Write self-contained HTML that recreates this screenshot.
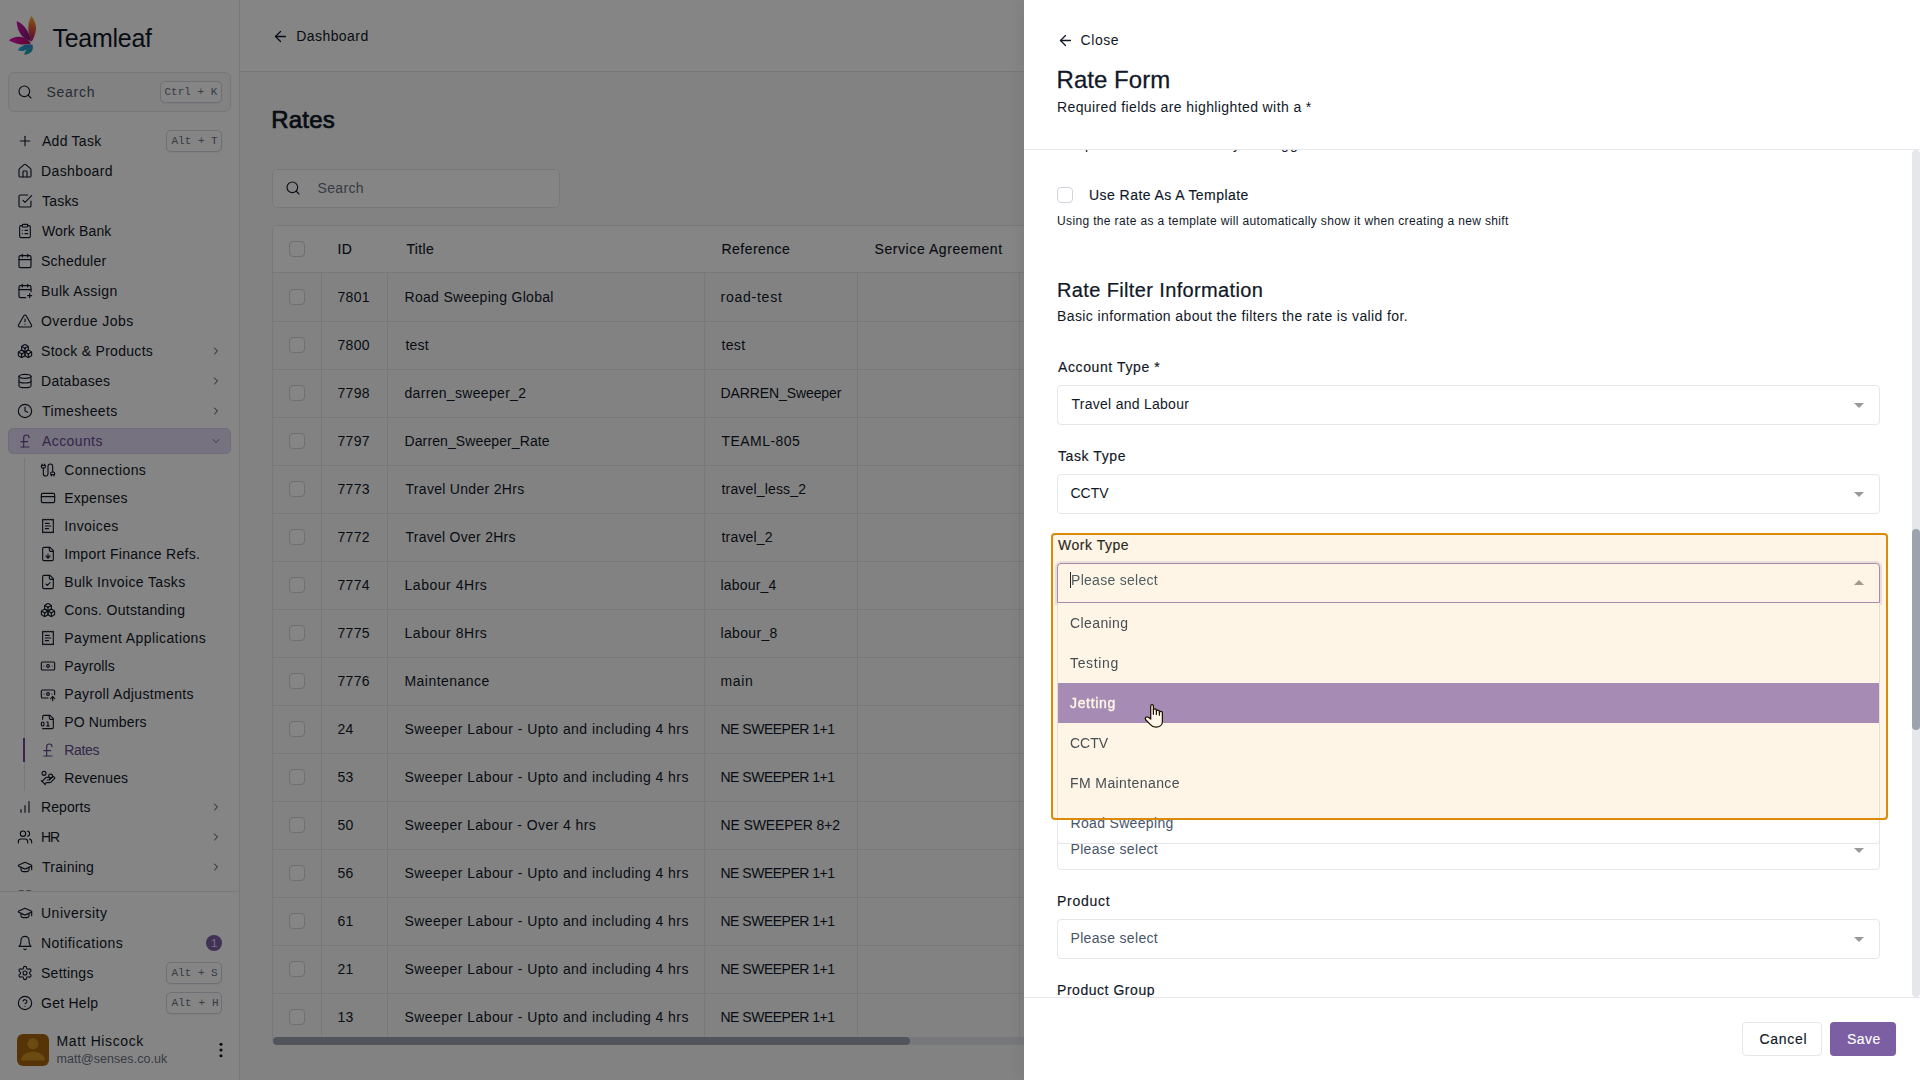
<!DOCTYPE html>
<html lang="en"><head><meta charset="utf-8"><title>Teamleaf - Rates</title>
<style>
*{box-sizing:border-box;margin:0;padding:0}
html,body{width:1920px;height:1080px;overflow:hidden;background:#f9fafb;font-family:"Liberation Sans",sans-serif;font-size:14px;color:#111827}
.bx{position:absolute;display:block}
.tx{position:absolute;white-space:pre;display:block}
.ix{position:absolute;display:block;line-height:0}
.ix svg{display:block}
.clip{position:absolute;overflow:hidden}
.mono{font-family:"Liberation Mono",monospace}
.sb{position:absolute;left:0;top:0;width:240px;height:1080px;background:#fff;border-right:1px solid #e5e7eb}
</style></head>
<body>
<div class="sb">
<svg class="bx" style="left:0;top:0" width="60" height="64" viewBox="0 0 60 64">
<defs>
<linearGradient id="g1" x1="0" y1="0" x2="0" y2="1"><stop offset="0" stop-color="#f9b52a"/><stop offset=".35" stop-color="#e8702e"/><stop offset=".7" stop-color="#c93c50"/><stop offset="1" stop-color="#a01f70"/></linearGradient>
<linearGradient id="g2" x1="0" y1="0" x2="1" y2="1"><stop offset="0" stop-color="#dc12aa"/><stop offset=".55" stop-color="#a3158c"/><stop offset="1" stop-color="#74196f"/></linearGradient>
<linearGradient id="g3" x1="0" y1="0" x2="1" y2="0"><stop offset="0" stop-color="#ea12bc"/><stop offset=".5" stop-color="#c80f8c"/><stop offset="1" stop-color="#a50f58"/></linearGradient>
<linearGradient id="g4" x1="0" y1="0" x2="1" y2="0"><stop offset="0" stop-color="#14b8ea"/><stop offset="1" stop-color="#3b78bc"/></linearGradient>
<linearGradient id="g5" x1="0" y1="1" x2="1" y2="0"><stop offset="0" stop-color="#12b894"/><stop offset=".6" stop-color="#2a98c4"/><stop offset="1" stop-color="#4478c8"/></linearGradient>
</defs>
<path d="M31.400 16C28.500 20 27.500 28 29 34c.8 3.500 1.800 6 2.600 7.700C33.500 39 35.500 34 36 29c.3-4.500-2-10-4.600-13z" fill="url(#g1)"/>
<path d="M16.600 21.200c.4 4.800 1.400 8.800 3.900 12.800 2.500 4 6.500 6.500 10.600 7.200-.6-4.200-2.600-9.200-5.600-13.200s-6-6-8.900-6.800z" fill="url(#g2)"/>
<path d="M8.800 40.200c3.200-2.700 7.200-3.900 11.200-3.400 4.500.6 8.500 3.200 11.100 6.500-4.100 1.500-8.600 1.700-12.600.7s-7.500-2.500-9.700-3.800z" fill="url(#g3)"/>
<path d="M17.900 50.300c1.100-2.300 3.100-4 6.100-5 2.500-.8 5.500-1.100 7.600-1-1.600 2.700-4.100 5.200-7.100 6.300-2.500.8-5 .6-6.600-.3z" fill="url(#g4)"/>
<path d="M24.100 54.700c.7-2.700 2.400-5.200 4.400-7.200 1.200-1.300 2.500-2.500 3.700-3.200 1 2.200 1 4.700-.2 6.700-1.500 2.300-4.700 3.700-7.900 3.700z" fill="url(#g5)"/>
</svg>
<span class="tx" style="left:52.50px;top:23.00px;font-size:25px;line-height:30px;letter-spacing:-0.271px;color:#111827;">Teamleaf</span>
<div class="bx" style="left:8px;top:72px;width:223px;height:39.5px;border:1px solid #e5e7eb;border-radius:6px;background:#fafafa"></div>
<span class="ix" style="left:17px;top:84.0px;color:#111827;"><svg class="ic" width="16" height="16" viewBox="0 0 24 24" fill="none" stroke="currentColor" stroke-width="1.7" stroke-linecap="round" stroke-linejoin="round" ><circle cx="11" cy="11" r="8"/><path d="m21 21-4.3-4.3"/></svg></span>
<span class="tx" style="left:46.50px;top:82.00px;font-size:14px;line-height:20px;letter-spacing:0.730px;color:#4b5563;">Search</span>
<div class="bx" style="left:160px;top:81px;width:62px;height:22px;border:1px solid #d3d7e3;border-radius:5px;background:#fff;box-shadow:0 1px 1px rgba(30,40,80,0.06)"></div><span class="tx mono" style="left:164.50px;top:85.00px;font-size:11px;line-height:14px;letter-spacing:0.000px;color:#6b7280;">Ctrl + K</span>
<div class="clip" style="left:0;top:120px;width:239px;height:771px"><div class="bx" style="left:0;top:-120px">
<div class="bx" style="left:8px;top:428px;width:223px;height:26px;background:#e2dbf5;border:1px solid #d8d0f0;border-radius:5px"></div>
<span class="ix" style="left:17px;top:133.0px;color:#111827;"><svg class="ic" width="16" height="16" viewBox="0 0 24 24" fill="none" stroke="currentColor" stroke-width="1.7" stroke-linecap="round" stroke-linejoin="round" ><path d="M5 12h14"/><path d="M12 5v14"/></svg></span>
<span class="tx" style="left:42.00px;top:131.00px;font-size:14px;line-height:20px;letter-spacing:0.259px;color:#111827;">Add Task</span>
<span class="ix" style="left:17px;top:163.0px;color:#111827;"><svg class="ic" width="16" height="16" viewBox="0 0 24 24" fill="none" stroke="currentColor" stroke-width="1.7" stroke-linecap="round" stroke-linejoin="round" ><path d="M15 21v-8a1 1 0 0 0-1-1h-4a1 1 0 0 0-1 1v8"/><path d="M3 10a2 2 0 0 1 .709-1.528l7-5.999a2 2 0 0 1 2.582 0l7 5.999A2 2 0 0 1 21 10v9a2 2 0 0 1-2 2H5a2 2 0 0 1-2-2z"/></svg></span>
<span class="tx" style="left:41.00px;top:161.00px;font-size:14px;line-height:20px;letter-spacing:0.393px;color:#111827;">Dashboard</span>
<span class="ix" style="left:17px;top:193.0px;color:#111827;"><svg class="ic" width="16" height="16" viewBox="0 0 24 24" fill="none" stroke="currentColor" stroke-width="1.7" stroke-linecap="round" stroke-linejoin="round" ><path d="m9 11 3 3L22 4"/><path d="M21 12v7a2 2 0 0 1-2 2H5a2 2 0 0 1-2-2V5a2 2 0 0 1 2-2h11"/></svg></span>
<span class="tx" style="left:42.00px;top:191.00px;font-size:14px;line-height:20px;letter-spacing:0.205px;color:#111827;">Tasks</span>
<span class="ix" style="left:17px;top:223.0px;color:#111827;"><svg class="ic" width="16" height="16" viewBox="0 0 24 24" fill="none" stroke="currentColor" stroke-width="1.7" stroke-linecap="round" stroke-linejoin="round" ><rect width="8" height="4" x="8" y="2" rx="1" ry="1"/><path d="M16 4h2a2 2 0 0 1 2 2v14a2 2 0 0 1-2 2H6a2 2 0 0 1-2-2V6a2 2 0 0 1 2-2h2"/><path d="M12 11h4"/><path d="M12 16h4"/><path d="M8 11h.01"/><path d="M8 16h.01"/></svg></span>
<span class="tx" style="left:42.00px;top:221.00px;font-size:14px;line-height:20px;letter-spacing:0.143px;color:#111827;">Work Bank</span>
<span class="ix" style="left:17px;top:253.0px;color:#111827;"><svg class="ic" width="16" height="16" viewBox="0 0 24 24" fill="none" stroke="currentColor" stroke-width="1.7" stroke-linecap="round" stroke-linejoin="round" ><path d="M8 2v4"/><path d="M16 2v4"/><rect width="18" height="18" x="3" y="4" rx="2"/><path d="M3 10h18"/></svg></span>
<span class="tx" style="left:41.00px;top:251.00px;font-size:14px;line-height:20px;letter-spacing:0.268px;color:#111827;">Scheduler</span>
<span class="ix" style="left:17px;top:283.0px;color:#111827;"><svg class="ic" width="16" height="16" viewBox="0 0 24 24" fill="none" stroke="currentColor" stroke-width="1.7" stroke-linecap="round" stroke-linejoin="round" ><path d="M8 2v4"/><path d="M16 2v4"/><path d="M21 13V6a2 2 0 0 0-2-2H5a2 2 0 0 0-2 2v14a2 2 0 0 0 2 2h8"/><path d="M3 10h18"/><path d="M16 19h6"/><path d="M19 16v6"/></svg></span>
<span class="tx" style="left:41.00px;top:281.00px;font-size:14px;line-height:20px;letter-spacing:0.380px;color:#111827;">Bulk Assign</span>
<span class="ix" style="left:17px;top:313.0px;color:#111827;"><svg class="ic" width="16" height="16" viewBox="0 0 24 24" fill="none" stroke="currentColor" stroke-width="1.7" stroke-linecap="round" stroke-linejoin="round" ><path d="m21.73 18-8-14a2 2 0 0 0-3.48 0l-8 14A2 2 0 0 0 4 21h16a2 2 0 0 0 1.73-3"/><path d="M12 9v4"/><path d="M12 17h.01"/></svg></span>
<span class="tx" style="left:41.00px;top:311.00px;font-size:14px;line-height:20px;letter-spacing:0.466px;color:#111827;">Overdue Jobs</span>
<span class="ix" style="left:17px;top:343.0px;color:#111827;"><svg class="ic" width="16" height="16" viewBox="0 0 24 24" fill="none" stroke="currentColor" stroke-width="1.7" stroke-linecap="round" stroke-linejoin="round" ><path d="M2.97 12.92A2 2 0 0 0 2 14.63v3.24a2 2 0 0 0 .97 1.71l3 1.8a2 2 0 0 0 2.06 0L12 19v-5.5l-5-3-4.03 2.42Z"/><path d="m7 16.5-4.74-2.85"/><path d="m7 16.5 5-3"/><path d="M7 16.5v5.17"/><path d="M12 13.5V19l3.97 2.38a2 2 0 0 0 2.06 0l3-1.8a2 2 0 0 0 .97-1.71v-3.24a2 2 0 0 0-.97-1.71L17 10.5l-5 3Z"/><path d="m17 16.5-5-3"/><path d="m17 16.5 4.74-2.85"/><path d="M17 16.5v5.17"/><path d="M7.97 4.42A2 2 0 0 0 7 6.13v4.37l5 3 5-3V6.13a2 2 0 0 0-.97-1.71l-3-1.8a2 2 0 0 0-2.06 0l-3 1.8Z"/><path d="M12 8 7.26 5.15"/><path d="m12 8 4.74-2.85"/><path d="M12 13.5V8"/></svg></span>
<span class="tx" style="left:41.00px;top:341.00px;font-size:14px;line-height:20px;letter-spacing:0.297px;color:#111827;">Stock &amp; Products</span>
<span class="ix" style="left:210px;top:345.0px;color:#111827;"><svg class="ic" width="12" height="12" viewBox="0 0 24 24" fill="none" stroke="currentColor" stroke-width="1.7" stroke-linecap="round" stroke-linejoin="round" ><path d="m9 18 6-6-6-6"/></svg></span>
<span class="ix" style="left:17px;top:373.0px;color:#111827;"><svg class="ic" width="16" height="16" viewBox="0 0 24 24" fill="none" stroke="currentColor" stroke-width="1.7" stroke-linecap="round" stroke-linejoin="round" ><ellipse cx="12" cy="5" rx="9" ry="3"/><path d="M3 5V19A9 3 0 0 0 21 19V5"/><path d="M3 12A9 3 0 0 0 21 12"/></svg></span>
<span class="tx" style="left:41.00px;top:371.00px;font-size:14px;line-height:20px;letter-spacing:0.268px;color:#111827;">Databases</span>
<span class="ix" style="left:210px;top:375.0px;color:#111827;"><svg class="ic" width="12" height="12" viewBox="0 0 24 24" fill="none" stroke="currentColor" stroke-width="1.7" stroke-linecap="round" stroke-linejoin="round" ><path d="m9 18 6-6-6-6"/></svg></span>
<span class="ix" style="left:17px;top:403.0px;color:#111827;"><svg class="ic" width="16" height="16" viewBox="0 0 24 24" fill="none" stroke="currentColor" stroke-width="1.7" stroke-linecap="round" stroke-linejoin="round" ><circle cx="12" cy="12" r="10"/><polyline points="12 6 12 12 16 14"/></svg></span>
<span class="tx" style="left:42.00px;top:401.00px;font-size:14px;line-height:20px;letter-spacing:0.386px;color:#111827;">Timesheets</span>
<span class="ix" style="left:210px;top:405.0px;color:#111827;"><svg class="ic" width="12" height="12" viewBox="0 0 24 24" fill="none" stroke="currentColor" stroke-width="1.7" stroke-linecap="round" stroke-linejoin="round" ><path d="m9 18 6-6-6-6"/></svg></span>
<span class="ix" style="left:17px;top:433.0px;color:#65488e;"><svg class="ic" width="16" height="16" viewBox="0 0 24 24" fill="none" stroke="currentColor" stroke-width="1.7" stroke-linecap="round" stroke-linejoin="round" ><path d="M18 7c0-5.333-8-5.333-8 0"/><path d="M10 7v14"/><path d="M6 21h12"/><path d="M6 13h10"/></svg></span>
<span class="tx" style="left:42.00px;top:431.00px;font-size:14px;line-height:20px;letter-spacing:0.401px;color:#65488e;">Accounts</span>
<span class="ix" style="left:210px;top:435.0px;color:#65488e;"><svg class="ic" width="12" height="12" viewBox="0 0 24 24" fill="none" stroke="currentColor" stroke-width="1.7" stroke-linecap="round" stroke-linejoin="round" ><path d="m6 9 6 6 6-6"/></svg></span>
<span class="ix" style="left:17px;top:799.0px;color:#111827;"><svg class="ic" width="16" height="16" viewBox="0 0 24 24" fill="none" stroke="currentColor" stroke-width="1.7" stroke-linecap="round" stroke-linejoin="round" ><line x1="18" x2="18" y1="20" y2="4"/><line x1="12" x2="12" y1="20" y2="10"/><line x1="6" x2="6" y1="20" y2="16"/></svg></span>
<span class="tx" style="left:41.00px;top:797.00px;font-size:14px;line-height:20px;letter-spacing:0.080px;color:#111827;">Reports</span>
<span class="ix" style="left:210px;top:801.0px;color:#111827;"><svg class="ic" width="12" height="12" viewBox="0 0 24 24" fill="none" stroke="currentColor" stroke-width="1.7" stroke-linecap="round" stroke-linejoin="round" ><path d="m9 18 6-6-6-6"/></svg></span>
<span class="ix" style="left:17px;top:829.0px;color:#111827;"><svg class="ic" width="16" height="16" viewBox="0 0 24 24" fill="none" stroke="currentColor" stroke-width="1.7" stroke-linecap="round" stroke-linejoin="round" ><path d="M16 21v-2a4 4 0 0 0-4-4H6a4 4 0 0 0-4 4v2"/><circle cx="9" cy="7" r="4"/><path d="M22 21v-2a4 4 0 0 0-3-3.87"/><path d="M16 3.13a4 4 0 0 1 0 7.75"/></svg></span>
<span class="tx" style="left:41.00px;top:827.00px;font-size:14px;line-height:20px;letter-spacing:-1.170px;color:#111827;">HR</span>
<span class="ix" style="left:210px;top:831.0px;color:#111827;"><svg class="ic" width="12" height="12" viewBox="0 0 24 24" fill="none" stroke="currentColor" stroke-width="1.7" stroke-linecap="round" stroke-linejoin="round" ><path d="m9 18 6-6-6-6"/></svg></span>
<span class="ix" style="left:17px;top:859.0px;color:#111827;"><svg class="ic" width="16" height="16" viewBox="0 0 24 24" fill="none" stroke="currentColor" stroke-width="1.7" stroke-linecap="round" stroke-linejoin="round" ><path d="M21.42 10.922a1 1 0 0 0-.019-1.838L12.83 5.18a2 2 0 0 0-1.66 0L2.6 9.08a1 1 0 0 0 0 1.832l8.57 3.908a2 2 0 0 0 1.66 0z"/><path d="M22 10v6"/><path d="M6 12.5V16a6 3 0 0 0 12 0v-3.5"/></svg></span>
<span class="tx" style="left:42.00px;top:857.00px;font-size:14px;line-height:20px;letter-spacing:0.259px;color:#111827;">Training</span>
<span class="ix" style="left:210px;top:861.0px;color:#111827;"><svg class="ic" width="12" height="12" viewBox="0 0 24 24" fill="none" stroke="currentColor" stroke-width="1.7" stroke-linecap="round" stroke-linejoin="round" ><path d="m9 18 6-6-6-6"/></svg></span>
<span class="ix" style="left:17px;top:889.0px;color:#111827;"><svg class="ic" width="16" height="16" viewBox="0 0 24 24" fill="none" stroke="currentColor" stroke-width="1.7" stroke-linecap="round" stroke-linejoin="round" ><rect width="7" height="7" x="3" y="3" rx="1"/><rect width="7" height="7" x="14" y="3" rx="1"/><rect width="7" height="7" x="14" y="14" rx="1"/><rect width="7" height="7" x="3" y="14" rx="1"/></svg></span>
<span class="tx" style="left:41.00px;top:887.00px;font-size:14px;line-height:20px;letter-spacing:1.430px;color:#111827;">Portal</span>
<span class="ix" style="left:210px;top:891.0px;color:#111827;"><svg class="ic" width="12" height="12" viewBox="0 0 24 24" fill="none" stroke="currentColor" stroke-width="1.7" stroke-linecap="round" stroke-linejoin="round" ><path d="m9 18 6-6-6-6"/></svg></span>
<div class="bx" style="left:166px;top:130px;width:56px;height:22px;border:1px solid #d3d7e3;border-radius:5px;background:#fff;box-shadow:0 1px 1px rgba(30,40,80,0.06)"></div><span class="tx mono" style="left:171.50px;top:134.00px;font-size:11px;line-height:14px;letter-spacing:0.000px;color:#6b7280;">Alt + T</span>
<div class="bx" style="left:24px;top:458px;width:1px;height:333px;background:#e5e7eb"></div>
<div class="bx" style="left:23px;top:738px;width:2px;height:24px;background:#6a4a96"></div>
<span class="ix" style="left:40px;top:462.0px;color:#111827;"><svg class="ic" width="16" height="16" viewBox="0 0 24 24" fill="none" stroke="currentColor" stroke-width="1.7" stroke-linecap="round" stroke-linejoin="round" ><path d="M17 21v-2a1 1 0 0 1-1-1v-1a2 2 0 0 1 2-2h2a2 2 0 0 1 2 2v1a1 1 0 0 1-1 1"/><path d="M19 15V6.5a1 1 0 0 0-7 0v11a1 1 0 0 1-7 0V9"/><path d="M21 21v-2h-4"/><path d="M3 5h4V3"/><path d="M7 5a1 1 0 0 1 1 1v1a2 2 0 0 1-2 2H4a2 2 0 0 1-2-2V6a1 1 0 0 1 1-1V3"/></svg></span>
<span class="tx" style="left:64.20px;top:460.00px;font-size:14px;line-height:20px;letter-spacing:0.380px;color:#111827;">Connections</span>
<span class="ix" style="left:40px;top:490.0px;color:#111827;"><svg class="ic" width="16" height="16" viewBox="0 0 24 24" fill="none" stroke="currentColor" stroke-width="1.7" stroke-linecap="round" stroke-linejoin="round" ><rect width="20" height="14" x="2" y="5" rx="2"/><line x1="2" x2="22" y1="10" y2="10"/></svg></span>
<span class="tx" style="left:64.20px;top:488.00px;font-size:14px;line-height:20px;letter-spacing:0.259px;color:#111827;">Expenses</span>
<span class="ix" style="left:40px;top:518.0px;color:#111827;"><svg class="ic" width="16" height="16" viewBox="0 0 24 24" fill="none" stroke="currentColor" stroke-width="1.7" stroke-linecap="round" stroke-linejoin="round" ><path d="M4 2v20l2-1 2 1 2-1 2 1 2-1 2 1 2-1 2 1V2l-2 1-2-1-2 1-2-1-2 1-2-1-2 1Z"/><path d="M14 8H8"/><path d="M16 12H8"/><path d="M13 16H8"/></svg></span>
<span class="tx" style="left:64.20px;top:516.00px;font-size:14px;line-height:20px;letter-spacing:0.401px;color:#111827;">Invoices</span>
<span class="ix" style="left:40px;top:546.0px;color:#111827;"><svg class="ic" width="16" height="16" viewBox="0 0 24 24" fill="none" stroke="currentColor" stroke-width="1.7" stroke-linecap="round" stroke-linejoin="round" ><path d="M15 2H6a2 2 0 0 0-2 2v16a2 2 0 0 0 2 2h12a2 2 0 0 0 2-2V7Z"/><path d="M14 2v4a2 2 0 0 0 2 2h4"/><path d="M12 18v-6"/><path d="m9 15 3 3 3-3"/></svg></span>
<span class="tx" style="left:64.20px;top:544.00px;font-size:14px;line-height:20px;letter-spacing:0.304px;color:#111827;">Import Finance Refs.</span>
<span class="ix" style="left:40px;top:574.0px;color:#111827;"><svg class="ic" width="16" height="16" viewBox="0 0 24 24" fill="none" stroke="currentColor" stroke-width="1.7" stroke-linecap="round" stroke-linejoin="round" ><path d="M15 2H6a2 2 0 0 0-2 2v16a2 2 0 0 0 2 2h12a2 2 0 0 0 2-2V7Z"/><path d="M14 2v4a2 2 0 0 0 2 2h4"/><path d="m9 15 2 2 4-4"/></svg></span>
<span class="tx" style="left:64.20px;top:572.00px;font-size:14px;line-height:20px;letter-spacing:0.359px;color:#111827;">Bulk Invoice Tasks</span>
<span class="ix" style="left:40px;top:602.0px;color:#111827;"><svg class="ic" width="16" height="16" viewBox="0 0 24 24" fill="none" stroke="currentColor" stroke-width="1.7" stroke-linecap="round" stroke-linejoin="round" ><path d="M2.97 12.92A2 2 0 0 0 2 14.63v3.24a2 2 0 0 0 .97 1.71l3 1.8a2 2 0 0 0 2.06 0L12 19v-5.5l-5-3-4.03 2.42Z"/><path d="m7 16.5-4.74-2.85"/><path d="m7 16.5 5-3"/><path d="M7 16.5v5.17"/><path d="M12 13.5V19l3.97 2.38a2 2 0 0 0 2.06 0l3-1.8a2 2 0 0 0 .97-1.71v-3.24a2 2 0 0 0-.97-1.71L17 10.5l-5 3Z"/><path d="m17 16.5-5-3"/><path d="m17 16.5 4.74-2.85"/><path d="M17 16.5v5.17"/><path d="M7.97 4.42A2 2 0 0 0 7 6.13v4.37l5 3 5-3V6.13a2 2 0 0 0-.97-1.71l-3-1.8a2 2 0 0 0-2.06 0l-3 1.8Z"/><path d="M12 8 7.26 5.15"/><path d="m12 8 4.74-2.85"/><path d="M12 13.5V8"/></svg></span>
<span class="tx" style="left:64.20px;top:600.00px;font-size:14px;line-height:20px;letter-spacing:0.299px;color:#111827;">Cons. Outstanding</span>
<span class="ix" style="left:40px;top:630.0px;color:#111827;"><svg class="ic" width="16" height="16" viewBox="0 0 24 24" fill="none" stroke="currentColor" stroke-width="1.7" stroke-linecap="round" stroke-linejoin="round" ><path d="M4 2v20l2-1 2 1 2-1 2 1 2-1 2 1 2-1 2 1V2l-2 1-2-1-2 1-2-1-2 1-2-1-2 1Z"/><path d="M14 8H8"/><path d="M16 12H8"/><path d="M13 16H8"/></svg></span>
<span class="tx" style="left:64.20px;top:628.00px;font-size:14px;line-height:20px;letter-spacing:0.409px;color:#111827;">Payment Applications</span>
<span class="ix" style="left:40px;top:658.0px;color:#111827;"><svg class="ic" width="16" height="16" viewBox="0 0 24 24" fill="none" stroke="currentColor" stroke-width="1.7" stroke-linecap="round" stroke-linejoin="round" ><rect width="20" height="12" x="2" y="6" rx="2"/><circle cx="12" cy="12" r="2"/><path d="M6 12h.01M18 12h.01"/></svg></span>
<span class="tx" style="left:64.20px;top:656.00px;font-size:14px;line-height:20px;letter-spacing:0.116px;color:#111827;">Payrolls</span>
<span class="ix" style="left:40px;top:686.0px;color:#111827;"><svg class="ic" width="16" height="16" viewBox="0 0 24 24" fill="none" stroke="currentColor" stroke-width="1.7" stroke-linecap="round" stroke-linejoin="round" ><path d="M12 18H4a2 2 0 0 1-2-2V8a2 2 0 0 1 2-2h16a2 2 0 0 1 2 2v5"/><path d="M18 12h.01"/><path d="M19 22v-6"/><path d="m22 19-3-3-3 3"/><path d="M6 12h.01"/><circle cx="12" cy="12" r="2"/></svg></span>
<span class="tx" style="left:64.20px;top:684.00px;font-size:14px;line-height:20px;letter-spacing:0.358px;color:#111827;">Payroll Adjustments</span>
<span class="ix" style="left:40px;top:714.0px;color:#111827;"><svg class="ic" width="16" height="16" viewBox="0 0 24 24" fill="none" stroke="currentColor" stroke-width="1.7" stroke-linecap="round" stroke-linejoin="round" ><path d="M4 22h14a2 2 0 0 0 2-2V7l-5-5H6a2 2 0 0 0-2 2v4"/><path d="M14 2v4a2 2 0 0 0 2 2h4"/><rect width="4" height="6" x="2" y="12" rx="2"/><path d="M10 12h2v6"/><path d="M10 18h4"/></svg></span>
<span class="tx" style="left:64.20px;top:712.00px;font-size:14px;line-height:20px;letter-spacing:0.163px;color:#111827;">PO Numbers</span>
<span class="ix" style="left:40px;top:742.0px;color:#65488e;"><svg class="ic" width="16" height="16" viewBox="0 0 24 24" fill="none" stroke="currentColor" stroke-width="1.7" stroke-linecap="round" stroke-linejoin="round" ><path d="M18 7c0-5.333-8-5.333-8 0"/><path d="M10 7v14"/><path d="M6 21h12"/><path d="M6 13h10"/></svg></span>
<span class="tx" style="left:64.20px;top:740.00px;font-size:14px;line-height:20px;letter-spacing:-0.295px;color:#65488e;">Rates</span>
<span class="ix" style="left:40px;top:770.0px;color:#111827;"><svg class="ic" width="16" height="16" viewBox="0 0 24 24" fill="none" stroke="currentColor" stroke-width="1.7" stroke-linecap="round" stroke-linejoin="round" ><path d="M11 15h2a2 2 0 1 0 0-4h-3c-.6 0-1.1.2-1.4.6L3 17"/><path d="m7 21 1.6-1.4c.3-.4.8-.6 1.4-.6h4c1.1 0 2.1-.4 2.8-1.2l4.6-4.4a2 2 0 0 0-2.75-2.91l-4.2 3.9"/><path d="m2 16 6 6"/><circle cx="16" cy="9" r="2.9"/><circle cx="6" cy="5" r="3"/></svg></span>
<span class="tx" style="left:64.20px;top:768.00px;font-size:14px;line-height:20px;letter-spacing:0.116px;color:#111827;">Revenues</span>
</div></div>
<div class="bx" style="left:0px;top:891px;width:239px;height:1px;background:#e5e7eb"></div>
<span class="ix" style="left:17px;top:905.0px;color:#111827;"><svg class="ic" width="16" height="16" viewBox="0 0 24 24" fill="none" stroke="currentColor" stroke-width="1.7" stroke-linecap="round" stroke-linejoin="round" ><path d="M21.42 10.922a1 1 0 0 0-.019-1.838L12.83 5.18a2 2 0 0 0-1.66 0L2.6 9.08a1 1 0 0 0 0 1.832l8.57 3.908a2 2 0 0 0 1.66 0z"/><path d="M22 10v6"/><path d="M6 12.5V16a6 3 0 0 0 12 0v-3.5"/></svg></span>
<span class="tx" style="left:41.00px;top:903.00px;font-size:14px;line-height:20px;letter-spacing:0.497px;color:#111827;">University</span>
<span class="ix" style="left:17px;top:935.0px;color:#111827;"><svg class="ic" width="16" height="16" viewBox="0 0 24 24" fill="none" stroke="currentColor" stroke-width="1.7" stroke-linecap="round" stroke-linejoin="round" ><path d="M6 8a6 6 0 0 1 12 0c0 7 3 9 3 9H3s3-2 3-9"/><path d="M10.3 21a1.94 1.94 0 0 0 3.4 0"/></svg></span>
<span class="tx" style="left:41.00px;top:933.00px;font-size:14px;line-height:20px;letter-spacing:0.455px;color:#111827;">Notifications</span>
<span class="ix" style="left:17px;top:965.0px;color:#111827;"><svg class="ic" width="16" height="16" viewBox="0 0 24 24" fill="none" stroke="currentColor" stroke-width="1.7" stroke-linecap="round" stroke-linejoin="round" ><path d="M12.22 2h-.44a2 2 0 0 0-2 2v.18a2 2 0 0 1-1 1.73l-.43.25a2 2 0 0 1-2 0l-.15-.08a2 2 0 0 0-2.73.73l-.22.38a2 2 0 0 0 .73 2.73l.15.1a2 2 0 0 1 1 1.72v.51a2 2 0 0 1-1 1.74l-.15.09a2 2 0 0 0-.73 2.73l.22.38a2 2 0 0 0 2.73.73l.15-.08a2 2 0 0 1 2 0l.43.25a2 2 0 0 1 1 1.73V20a2 2 0 0 0 2 2h.44a2 2 0 0 0 2-2v-.18a2 2 0 0 1 1-1.73l.43-.25a2 2 0 0 1 2 0l.15.08a2 2 0 0 0 2.73-.73l.22-.39a2 2 0 0 0-.73-2.73l-.15-.08a2 2 0 0 1-1-1.74v-.5a2 2 0 0 1 1-1.74l.15-.09a2 2 0 0 0 .73-2.73l-.22-.38a2 2 0 0 0-2.73-.73l-.15.08a2 2 0 0 1-2 0l-.43-.25a2 2 0 0 1-1-1.73V4a2 2 0 0 0-2-2z"/><circle cx="12" cy="12" r="3"/></svg></span>
<span class="tx" style="left:41.00px;top:963.00px;font-size:14px;line-height:20px;letter-spacing:0.259px;color:#111827;">Settings</span>
<span class="ix" style="left:17px;top:995.0px;color:#111827;"><svg class="ic" width="16" height="16" viewBox="0 0 24 24" fill="none" stroke="currentColor" stroke-width="1.7" stroke-linecap="round" stroke-linejoin="round" ><circle cx="12" cy="12" r="10"/><path d="M9.09 9a3 3 0 0 1 5.83 1c0 2-3 3-3 3"/><path d="M12 17h.01"/></svg></span>
<span class="tx" style="left:41.00px;top:993.00px;font-size:14px;line-height:20px;letter-spacing:0.259px;color:#111827;">Get Help</span>
<div class="bx" style="left:206px;top:935px;width:16px;height:16px;background:#7c5ea3;border-radius:8px"></div>
<span class="tx" style="left:211.00px;top:936.00px;font-size:11.5px;line-height:14px;letter-spacing:0.000px;color:#e3d8f3;">1</span>
<div class="bx" style="left:166px;top:962px;width:56px;height:22px;border:1px solid #d3d7e3;border-radius:5px;background:#fff;box-shadow:0 1px 1px rgba(30,40,80,0.06)"></div><span class="tx mono" style="left:171.50px;top:966.00px;font-size:11px;line-height:14px;letter-spacing:0.000px;color:#6b7280;">Alt + S</span>
<div class="bx" style="left:166px;top:992px;width:56px;height:22px;border:1px solid #d3d7e3;border-radius:5px;background:#fff;box-shadow:0 1px 1px rgba(30,40,80,0.06)"></div><span class="tx mono" style="left:171.50px;top:996.00px;font-size:11px;line-height:14px;letter-spacing:0.167px;color:#6b7280;">Alt + H</span>
<div class="bx" style="left:17px;top:1034px;width:32px;height:32px;background:#a5650e;border-radius:6px;overflow:hidden"></div>
<svg class="bx" style="left:17px;top:1034px" width="32" height="32" viewBox="0 0 32 32"><circle cx="16" cy="9.800" r="5.500" fill="#cf9024"/><path d="M5.200 26.600c-.8 0-1.200-.6-1-1.400 1.200-4.600 5.600-7.400 11.800-7.400s10.600 2.800 11.800 7.400c.2.800-.2 1.400-1 1.400z" fill="#cf9024"/></svg>
<span class="tx" style="left:56.50px;top:1031.00px;font-size:14px;line-height:20px;letter-spacing:0.603px;color:#111827;">Matt Hiscock</span>
<span class="tx" style="left:56.50px;top:1051.00px;font-size:12.5px;line-height:16px;letter-spacing:0.050px;color:#6b7280;">matt@senses.co.uk</span>
<svg class="bx" style="left:213px;top:1039.5px" width="16" height="20" viewBox="0 0 16 20" fill="#111827"><circle cx="8" cy="4.300" r="1.550"/><circle cx="8" cy="10" r="1.550"/><circle cx="8" cy="15.700" r="1.550"/></svg>
</div>
<div class="bx" style="left:240px;top:0px;width:1680px;height:71px;background:#fff"></div>
<div class="bx" style="left:240px;top:71px;width:1680px;height:1px;background:#e5e7eb"></div>
<span class="ix" style="left:271.7px;top:27.5px;color:#111827;"><svg class="ic" width="17" height="17" viewBox="0 0 24 24" fill="none" stroke="currentColor" stroke-width="1.8" stroke-linecap="round" stroke-linejoin="round" ><path d="m12 19-7-7 7-7"/><path d="M19 12H5"/></svg></span>
<span class="tx" style="left:296.20px;top:26.00px;font-size:14px;line-height:20px;letter-spacing:0.443px;color:#111827;">Dashboard</span>
<span class="tx" style="left:271.30px;top:104.00px;font-size:24px;line-height:32px;letter-spacing:0.175px;-webkit-text-stroke:0.72px currentColor;color:#111827;">Rates</span>
<div class="bx" style="left:272px;top:168.5px;width:288px;height:39px;border:1px solid #e5e7eb;border-radius:5px;background:#fff"></div>
<span class="ix" style="left:285px;top:180.0px;color:#111827;"><svg class="ic" width="16" height="16" viewBox="0 0 24 24" fill="none" stroke="currentColor" stroke-width="1.7" stroke-linecap="round" stroke-linejoin="round" ><circle cx="11" cy="11" r="8"/><path d="m21 21-4.3-4.3"/></svg></span>
<span class="tx" style="left:317.50px;top:178.00px;font-size:14px;line-height:20px;letter-spacing:0.330px;color:#6b7280;">Search</span>
<div class="bx" style="left:272px;top:225px;width:1700px;height:816px;border:1px solid #e5e7eb;border-radius:6px 0 0 0;background:#f9fafb;overflow:hidden">
</div>
<div class="bx" style="left:273px;top:226px;width:1700px;height:46px;background:#fff;border-radius:5px 0 0 0"></div>
<div class="bx" style="left:289px;top:241px;width:16px;height:16px;border:1px solid #d1d5db;border-radius:4px;background:#fff"></div>
<span class="tx" style="left:337.50px;top:239.00px;font-size:14px;line-height:20px;letter-spacing:0.330px;-webkit-text-stroke:0.15px currentColor;color:#111827;">ID</span>
<span class="tx" style="left:406.50px;top:239.00px;font-size:14px;line-height:20px;letter-spacing:0.330px;-webkit-text-stroke:0.15px currentColor;color:#111827;">Title</span>
<span class="tx" style="left:721.50px;top:239.00px;font-size:14px;line-height:20px;letter-spacing:0.455px;-webkit-text-stroke:0.15px currentColor;color:#111827;">Reference</span>
<span class="tx" style="left:874.50px;top:239.00px;font-size:14px;line-height:20px;letter-spacing:0.580px;-webkit-text-stroke:0.15px currentColor;color:#111827;">Service Agreement</span>
<div class="bx" style="left:273px;top:272px;width:1700px;height:1px;background:#e5e7eb"></div>
<div class="bx" style="left:289px;top:289px;width:16px;height:16px;border:1px solid #d1d5db;border-radius:4px;background:#fff"></div>
<span class="tx" style="left:337.50px;top:287.00px;font-size:14px;line-height:20px;letter-spacing:0.330px;color:#111827;">7801</span>
<span class="tx" style="left:404.50px;top:287.00px;font-size:14px;line-height:20px;letter-spacing:0.304px;color:#111827;">Road Sweeping Global</span>
<span class="tx" style="left:720.50px;top:287.00px;font-size:14px;line-height:20px;letter-spacing:0.755px;color:#111827;">road-test</span>
<div class="bx" style="left:273px;top:321px;width:1700px;height:1px;background:#e5e7eb"></div>
<div class="bx" style="left:289px;top:337px;width:16px;height:16px;border:1px solid #d1d5db;border-radius:4px;background:#fff"></div>
<span class="tx" style="left:337.50px;top:335.00px;font-size:14px;line-height:20px;letter-spacing:0.330px;color:#111827;">7800</span>
<span class="tx" style="left:405.50px;top:335.00px;font-size:14px;line-height:20px;letter-spacing:0.163px;color:#111827;">test</span>
<span class="tx" style="left:721.50px;top:335.00px;font-size:14px;line-height:20px;letter-spacing:0.330px;color:#111827;">test</span>
<div class="bx" style="left:273px;top:369px;width:1700px;height:1px;background:#e5e7eb"></div>
<div class="bx" style="left:289px;top:385px;width:16px;height:16px;border:1px solid #d1d5db;border-radius:4px;background:#fff"></div>
<span class="tx" style="left:337.50px;top:383.00px;font-size:14px;line-height:20px;letter-spacing:0.330px;color:#111827;">7798</span>
<span class="tx" style="left:404.50px;top:383.00px;font-size:14px;line-height:20px;letter-spacing:0.317px;color:#111827;">darren_sweeper_2</span>
<span class="tx" style="left:720.50px;top:383.00px;font-size:14px;line-height:20px;letter-spacing:-0.101px;color:#111827;">DARREN_Sweeper</span>
<div class="bx" style="left:273px;top:417px;width:1700px;height:1px;background:#e5e7eb"></div>
<div class="bx" style="left:289px;top:433px;width:16px;height:16px;border:1px solid #d1d5db;border-radius:4px;background:#fff"></div>
<span class="tx" style="left:337.50px;top:431.00px;font-size:14px;line-height:20px;letter-spacing:0.330px;color:#111827;">7797</span>
<span class="tx" style="left:404.50px;top:431.00px;font-size:14px;line-height:20px;letter-spacing:0.108px;color:#111827;">Darren_Sweeper_Rate</span>
<span class="tx" style="left:721.50px;top:431.00px;font-size:14px;line-height:20px;letter-spacing:0.455px;color:#111827;">TEAML-805</span>
<div class="bx" style="left:273px;top:465px;width:1700px;height:1px;background:#e5e7eb"></div>
<div class="bx" style="left:289px;top:481px;width:16px;height:16px;border:1px solid #d1d5db;border-radius:4px;background:#fff"></div>
<span class="tx" style="left:337.50px;top:479.00px;font-size:14px;line-height:20px;letter-spacing:0.330px;color:#111827;">7773</span>
<span class="tx" style="left:405.50px;top:479.00px;font-size:14px;line-height:20px;letter-spacing:0.299px;color:#111827;">Travel Under 2Hrs</span>
<span class="tx" style="left:721.50px;top:479.00px;font-size:14px;line-height:20px;letter-spacing:0.163px;color:#111827;">travel_less_2</span>
<div class="bx" style="left:273px;top:513px;width:1700px;height:1px;background:#e5e7eb"></div>
<div class="bx" style="left:289px;top:529px;width:16px;height:16px;border:1px solid #d1d5db;border-radius:4px;background:#fff"></div>
<span class="tx" style="left:337.50px;top:527.00px;font-size:14px;line-height:20px;letter-spacing:0.330px;color:#111827;">7772</span>
<span class="tx" style="left:405.50px;top:527.00px;font-size:14px;line-height:20px;letter-spacing:0.263px;color:#111827;">Travel Over 2Hrs</span>
<span class="tx" style="left:721.50px;top:527.00px;font-size:14px;line-height:20px;letter-spacing:0.187px;color:#111827;">travel_2</span>
<div class="bx" style="left:273px;top:561px;width:1700px;height:1px;background:#e5e7eb"></div>
<div class="bx" style="left:289px;top:577px;width:16px;height:16px;border:1px solid #d1d5db;border-radius:4px;background:#fff"></div>
<span class="tx" style="left:337.50px;top:575.00px;font-size:14px;line-height:20px;letter-spacing:0.330px;color:#111827;">7774</span>
<span class="tx" style="left:404.50px;top:575.00px;font-size:14px;line-height:20px;letter-spacing:0.530px;color:#111827;">Labour 4Hrs</span>
<span class="tx" style="left:720.50px;top:575.00px;font-size:14px;line-height:20px;letter-spacing:0.187px;color:#111827;">labour_4</span>
<div class="bx" style="left:273px;top:609px;width:1700px;height:1px;background:#e5e7eb"></div>
<div class="bx" style="left:289px;top:625px;width:16px;height:16px;border:1px solid #d1d5db;border-radius:4px;background:#fff"></div>
<span class="tx" style="left:337.50px;top:623.00px;font-size:14px;line-height:20px;letter-spacing:0.330px;color:#111827;">7775</span>
<span class="tx" style="left:404.50px;top:623.00px;font-size:14px;line-height:20px;letter-spacing:0.530px;color:#111827;">Labour 8Hrs</span>
<span class="tx" style="left:720.50px;top:623.00px;font-size:14px;line-height:20px;letter-spacing:0.330px;color:#111827;">labour_8</span>
<div class="bx" style="left:273px;top:657px;width:1700px;height:1px;background:#e5e7eb"></div>
<div class="bx" style="left:289px;top:673px;width:16px;height:16px;border:1px solid #d1d5db;border-radius:4px;background:#fff"></div>
<span class="tx" style="left:337.50px;top:671.00px;font-size:14px;line-height:20px;letter-spacing:0.330px;color:#111827;">7776</span>
<span class="tx" style="left:404.50px;top:671.00px;font-size:14px;line-height:20px;letter-spacing:0.455px;color:#111827;">Maintenance</span>
<span class="tx" style="left:720.50px;top:671.00px;font-size:14px;line-height:20px;letter-spacing:0.663px;color:#111827;">main</span>
<div class="bx" style="left:273px;top:705px;width:1700px;height:1px;background:#e5e7eb"></div>
<div class="bx" style="left:289px;top:721px;width:16px;height:16px;border:1px solid #d1d5db;border-radius:4px;background:#fff"></div>
<span class="tx" style="left:337.50px;top:719.00px;font-size:14px;line-height:20px;letter-spacing:0.330px;color:#111827;">24</span>
<span class="tx" style="left:404.50px;top:719.00px;font-size:14px;line-height:20px;letter-spacing:0.443px;color:#111827;">Sweeper Labour - Upto and including 4 hrs</span>
<span class="tx" style="left:720.50px;top:719.00px;font-size:14px;line-height:20px;letter-spacing:-0.497px;color:#111827;">NE SWEEPER 1+1</span>
<div class="bx" style="left:273px;top:753px;width:1700px;height:1px;background:#e5e7eb"></div>
<div class="bx" style="left:289px;top:769px;width:16px;height:16px;border:1px solid #d1d5db;border-radius:4px;background:#fff"></div>
<span class="tx" style="left:337.50px;top:767.00px;font-size:14px;line-height:20px;letter-spacing:0.330px;color:#111827;">53</span>
<span class="tx" style="left:404.50px;top:767.00px;font-size:14px;line-height:20px;letter-spacing:0.443px;color:#111827;">Sweeper Labour - Upto and including 4 hrs</span>
<span class="tx" style="left:720.50px;top:767.00px;font-size:14px;line-height:20px;letter-spacing:-0.497px;color:#111827;">NE SWEEPER 1+1</span>
<div class="bx" style="left:273px;top:801px;width:1700px;height:1px;background:#e5e7eb"></div>
<div class="bx" style="left:289px;top:817px;width:16px;height:16px;border:1px solid #d1d5db;border-radius:4px;background:#fff"></div>
<span class="tx" style="left:337.50px;top:815.00px;font-size:14px;line-height:20px;letter-spacing:0.330px;color:#111827;">50</span>
<span class="tx" style="left:404.50px;top:815.00px;font-size:14px;line-height:20px;letter-spacing:0.415px;color:#111827;">Sweeper Labour - Over 4 hrs</span>
<span class="tx" style="left:720.50px;top:815.00px;font-size:14px;line-height:20px;letter-spacing:-0.112px;color:#111827;">NE SWEEPER 8+2</span>
<div class="bx" style="left:273px;top:849px;width:1700px;height:1px;background:#e5e7eb"></div>
<div class="bx" style="left:289px;top:865px;width:16px;height:16px;border:1px solid #d1d5db;border-radius:4px;background:#fff"></div>
<span class="tx" style="left:337.50px;top:863.00px;font-size:14px;line-height:20px;letter-spacing:0.330px;color:#111827;">56</span>
<span class="tx" style="left:404.50px;top:863.00px;font-size:14px;line-height:20px;letter-spacing:0.443px;color:#111827;">Sweeper Labour - Upto and including 4 hrs</span>
<span class="tx" style="left:720.50px;top:863.00px;font-size:14px;line-height:20px;letter-spacing:-0.497px;color:#111827;">NE SWEEPER 1+1</span>
<div class="bx" style="left:273px;top:897px;width:1700px;height:1px;background:#e5e7eb"></div>
<div class="bx" style="left:289px;top:913px;width:16px;height:16px;border:1px solid #d1d5db;border-radius:4px;background:#fff"></div>
<span class="tx" style="left:337.50px;top:911.00px;font-size:14px;line-height:20px;letter-spacing:0.330px;color:#111827;">61</span>
<span class="tx" style="left:404.50px;top:911.00px;font-size:14px;line-height:20px;letter-spacing:0.443px;color:#111827;">Sweeper Labour - Upto and including 4 hrs</span>
<span class="tx" style="left:720.50px;top:911.00px;font-size:14px;line-height:20px;letter-spacing:-0.497px;color:#111827;">NE SWEEPER 1+1</span>
<div class="bx" style="left:273px;top:945px;width:1700px;height:1px;background:#e5e7eb"></div>
<div class="bx" style="left:289px;top:961px;width:16px;height:16px;border:1px solid #d1d5db;border-radius:4px;background:#fff"></div>
<span class="tx" style="left:337.50px;top:959.00px;font-size:14px;line-height:20px;letter-spacing:0.330px;color:#111827;">21</span>
<span class="tx" style="left:404.50px;top:959.00px;font-size:14px;line-height:20px;letter-spacing:0.443px;color:#111827;">Sweeper Labour - Upto and including 4 hrs</span>
<span class="tx" style="left:720.50px;top:959.00px;font-size:14px;line-height:20px;letter-spacing:-0.497px;color:#111827;">NE SWEEPER 1+1</span>
<div class="bx" style="left:273px;top:993px;width:1700px;height:1px;background:#e5e7eb"></div>
<div class="bx" style="left:289px;top:1009px;width:16px;height:16px;border:1px solid #d1d5db;border-radius:4px;background:#fff"></div>
<span class="tx" style="left:337.50px;top:1007.00px;font-size:14px;line-height:20px;letter-spacing:0.330px;color:#111827;">13</span>
<span class="tx" style="left:404.50px;top:1007.00px;font-size:14px;line-height:20px;letter-spacing:0.443px;color:#111827;">Sweeper Labour - Upto and including 4 hrs</span>
<span class="tx" style="left:720.50px;top:1007.00px;font-size:14px;line-height:20px;letter-spacing:-0.497px;color:#111827;">NE SWEEPER 1+1</span>
<div class="bx" style="left:321px;top:272px;width:1px;height:768px;background:#e5e7eb"></div>
<div class="bx" style="left:387px;top:272px;width:1px;height:768px;background:#e5e7eb"></div>
<div class="bx" style="left:704px;top:272px;width:1px;height:768px;background:#e5e7eb"></div>
<div class="bx" style="left:857px;top:272px;width:1px;height:768px;background:#e5e7eb"></div>
<div class="bx" style="left:1019px;top:272px;width:1px;height:768px;background:#e5e7eb"></div>
<div class="bx" style="left:273px;top:1037px;width:1700px;height:8px;background:#e5e7eb;border-radius:4px"></div>
<div class="bx" style="left:273px;top:1037px;width:637px;height:8px;background:#9ca3af;border-radius:4px"></div>
<div class="bx" style="left:0px;top:0px;width:1920px;height:1080px;background:rgba(0,0,0,0.477)"></div>
<div class="bx" style="left:1024px;top:0;width:896px;height:1080px;background:#fff;box-shadow:-4px 0 12px rgba(0,0,0,0.05)"></div>
<span class="ix" style="left:1056.6px;top:31.5px;color:#111827;"><svg class="ic" width="17" height="17" viewBox="0 0 24 24" fill="none" stroke="currentColor" stroke-width="1.8" stroke-linecap="round" stroke-linejoin="round" ><path d="m12 19-7-7 7-7"/><path d="M19 12H5"/></svg></span>
<span class="tx" style="left:1080.50px;top:30.00px;font-size:14px;line-height:20px;letter-spacing:0.580px;color:#111827;">Close</span>
<span class="tx" style="left:1056.50px;top:63.70px;font-size:24px;line-height:32px;letter-spacing:0.050px;-webkit-text-stroke:0.26px currentColor;color:#111827;">Rate Form</span>
<span class="tx" style="left:1057.00px;top:97.00px;font-size:14px;line-height:20px;letter-spacing:0.394px;color:#111827;">Required fields are highlighted with a *</span>
<div class="bx" style="left:1024px;top:149px;width:896px;height:1px;background:#e5e7eb"></div>
<div class="clip" style="left:1024px;top:150px;width:896px;height:847px"><div class="bx" style="left:-1024px;top:-150px">
<span class="tx" style="left:1085.00px;top:134.30px;font-size:14px;line-height:20px;letter-spacing:0.000px;color:#111827;">p</span>
<span class="tx" style="left:1233.00px;top:134.30px;font-size:14px;line-height:20px;letter-spacing:0.000px;color:#111827;">y</span>
<span class="tx" style="left:1281.00px;top:134.30px;font-size:14px;line-height:20px;letter-spacing:1.330px;color:#111827;">gg</span>
<div class="bx" style="left:1057px;top:187px;width:16px;height:16px;border:1px solid #d1d5db;border-radius:4px;background:#fff"></div>
<span class="tx" style="left:1089.00px;top:185.00px;font-size:14px;line-height:20px;letter-spacing:0.449px;-webkit-text-stroke:0.15px currentColor;color:#111827;">Use Rate As A Template</span>
<span class="tx" style="left:1057.00px;top:213.00px;font-size:12px;line-height:16px;letter-spacing:0.356px;color:#111827;">Using the rate as a template will automatically show it when creating a new shift</span>
<span class="tx" style="left:1057.00px;top:276.00px;font-size:20px;line-height:28px;letter-spacing:0.368px;-webkit-text-stroke:0.22px currentColor;color:#111827;">Rate Filter Information</span>
<span class="tx" style="left:1057.00px;top:306.00px;font-size:14px;line-height:20px;letter-spacing:0.391px;color:#111827;">Basic information about the filters the rate is valid for.</span>
<span class="tx" style="left:1058.00px;top:357.00px;font-size:14px;line-height:20px;letter-spacing:0.599px;-webkit-text-stroke:0.15px currentColor;color:#111827;">Account Type *</span>
<div class="bx" style="left:1057px;top:385px;width:823px;height:40px;border:1px solid #e5e7eb;border-radius:4px;background:#fff"></div><span class="tx" style="left:1071.50px;top:394.00px;font-size:14px;line-height:20px;letter-spacing:0.268px;color:#111827;">Travel and Labour</span><svg class="bx" style="left:1853.5px;top:403.0px" width="10" height="5" viewBox="0 0 10 5"><polygon points="0,0 10,0 5,5" fill="#999"/></svg>
<span class="tx" style="left:1058.00px;top:446.00px;font-size:14px;line-height:20px;letter-spacing:0.580px;-webkit-text-stroke:0.15px currentColor;color:#111827;">Task Type</span>
<div class="bx" style="left:1057px;top:474px;width:823px;height:40px;border:1px solid #e5e7eb;border-radius:4px;background:#fff"></div><span class="tx" style="left:1070.50px;top:483.00px;font-size:14px;line-height:20px;letter-spacing:-0.003px;color:#111827;">CCTV</span><svg class="bx" style="left:1853.5px;top:492.0px" width="10" height="5" viewBox="0 0 10 5"><polygon points="0,0 10,0 5,5" fill="#999"/></svg>
<span class="tx" style="left:1058.00px;top:535.00px;font-size:14px;line-height:20px;letter-spacing:0.518px;-webkit-text-stroke:0.15px currentColor;color:#111827;">Work Type</span>
<div class="bx" style="left:1057px;top:830px;width:823px;height:40px;border:1px solid #e5e7eb;border-radius:4px;background:#fff"></div><span class="tx" style="left:1070.50px;top:839.00px;font-size:14px;line-height:20px;letter-spacing:0.330px;color:#475569;">Please select</span><svg class="bx" style="left:1853.5px;top:848.0px" width="10" height="5" viewBox="0 0 10 5"><polygon points="0,0 10,0 5,5" fill="#999"/></svg>
<span class="tx" style="left:1057.00px;top:891.00px;font-size:14px;line-height:20px;letter-spacing:0.747px;-webkit-text-stroke:0.15px currentColor;color:#111827;">Product</span>
<div class="bx" style="left:1057px;top:919px;width:823px;height:40px;border:1px solid #e5e7eb;border-radius:4px;background:#fff"></div><span class="tx" style="left:1070.50px;top:928.00px;font-size:14px;line-height:20px;letter-spacing:0.330px;color:#475569;">Please select</span><svg class="bx" style="left:1853.5px;top:937.0px" width="10" height="5" viewBox="0 0 10 5"><polygon points="0,0 10,0 5,5" fill="#999"/></svg>
<span class="tx" style="left:1057.00px;top:980.00px;font-size:14px;line-height:20px;letter-spacing:0.538px;-webkit-text-stroke:0.15px currentColor;color:#111827;">Product Group</span>
<div class="bx" style="left:1057px;top:1008px;width:823px;height:40px;border:1px solid #e5e7eb;border-radius:4px;background:#fff"></div><span class="tx" style="left:1070.50px;top:1017.00px;font-size:14px;line-height:20px;letter-spacing:0.330px;color:#475569;">Please select</span><svg class="bx" style="left:1853.5px;top:1026.0px" width="10" height="5" viewBox="0 0 10 5"><polygon points="0,0 10,0 5,5" fill="#999"/></svg>
<div class="bx" style="left:1057px;top:563px;width:823px;height:40px;border:1px solid #a288bd;border-radius:4px 4px 0 0;background:#fff;box-shadow:0 0 0 2px rgba(124,94,163,0.16)"></div>
<div class="bx" style="left:1070px;top:572px;width:1px;height:16px;background:#111827"></div>
<span class="tx" style="left:1071.00px;top:570.00px;font-size:14px;line-height:20px;letter-spacing:0.288px;color:#3e566c;will-change:transform;">Please select</span>
<svg class="bx" style="left:1854px;top:579.9px" width="10" height="5" viewBox="0 0 10 5"><polygon points="0,5 5,0 10,5" fill="#999"/></svg>
<div class="bx" style="left:1057px;top:603px;width:823px;height:241px;border:1px solid #e5e7eb;border-top:none;border-radius:0 0 4px 4px;background:#fff"></div>
<div class="bx" style="left:1058px;top:683px;width:821px;height:40px;background:#9e8bc8"></div>
<span class="tx" style="left:1070.00px;top:613.00px;font-size:14px;line-height:20px;letter-spacing:0.401px;color:#33465c;will-change:transform;">Cleaning</span>
<span class="tx" style="left:1070.00px;top:653.00px;font-size:14px;line-height:20px;letter-spacing:0.663px;color:#33465c;will-change:transform;">Testing</span>
<span class="tx" style="left:1070.00px;top:693.00px;font-size:14px;line-height:20px;letter-spacing:0.663px;-webkit-text-stroke:0.42px currentColor;color:#fff;will-change:transform;">Jetting</span>
<span class="tx" style="left:1070.00px;top:733.00px;font-size:14px;line-height:20px;letter-spacing:-0.003px;color:#33465c;will-change:transform;">CCTV</span>
<span class="tx" style="left:1070.00px;top:773.00px;font-size:14px;line-height:20px;letter-spacing:0.407px;color:#33465c;will-change:transform;">FM Maintenance</span>
<span class="tx" style="left:1070.50px;top:813.00px;font-size:14px;line-height:20px;letter-spacing:0.330px;color:#475569;">Road Sweeping</span>
</div></div>
<div class="bx" style="left:1912px;top:150px;width:8px;height:847px;background:#e5e7eb;border-radius:4px"></div>
<div class="bx" style="left:1912px;top:529px;width:8px;height:201px;background:#9ca3af;border-radius:4px"></div>
<div class="bx" style="left:1024px;top:997px;width:896px;height:1px;background:#e5e7eb"></div>
<div class="bx" style="left:1742px;top:1022px;width:80px;height:34px;border:1px solid #e5e7eb;border-radius:4px;background:#fff"></div>
<span class="tx" style="left:1759.50px;top:1029.00px;font-size:14px;line-height:20px;letter-spacing:0.730px;-webkit-text-stroke:0.15px currentColor;color:#111827;">Cancel</span>
<div class="bx" style="left:1830px;top:1022px;width:66px;height:34px;background:#7c5ea3;border-radius:4px"></div>
<span class="tx" style="left:1847.00px;top:1029.00px;font-size:14px;line-height:20px;letter-spacing:0.497px;-webkit-text-stroke:0.15px currentColor;color:#fff;">Save</span>
<svg class="bx" style="left:1143px;top:702px" width="24" height="28" viewBox="0 0 24 28">
<path d="M7.700 17.100V3.900a1.350 1.350 0 0 1 2.700 0V7.800c.3-.6 1-.9 1.600-.9.900 0 1.400.6 1.400 1.400v.7c.3-.5.900-.8 1.500-.8.900 0 1.500.6 1.500 1.400v.6c.3-.5.900-.8 1.500-.8.900 0 1.500.7 1.500 1.500V19.500c0 3.400-2.600 5.700-6.400 5.700-2.400 0-4.300-1-5.800-2.800L2.900 18c-.8-.9-.8-2 0-2.700.7-.6 1.700-.6 2.400 0z" fill="#fff" stroke="#050505" stroke-width="1.250" stroke-linejoin="round"/>
<path d="M10.400 7.800v4.500M13.400 8.600v3.800M16.400 9.900v3.300" stroke="#050505" stroke-width="1.200" stroke-linecap="round" fill="none"/>
</svg>
<div class="bx" style="left:1051px;top:533px;width:837px;height:287px;border:2px solid #dc8a08;border-radius:4px;background:rgba(245,158,11,0.10)"></div>
</body></html>
